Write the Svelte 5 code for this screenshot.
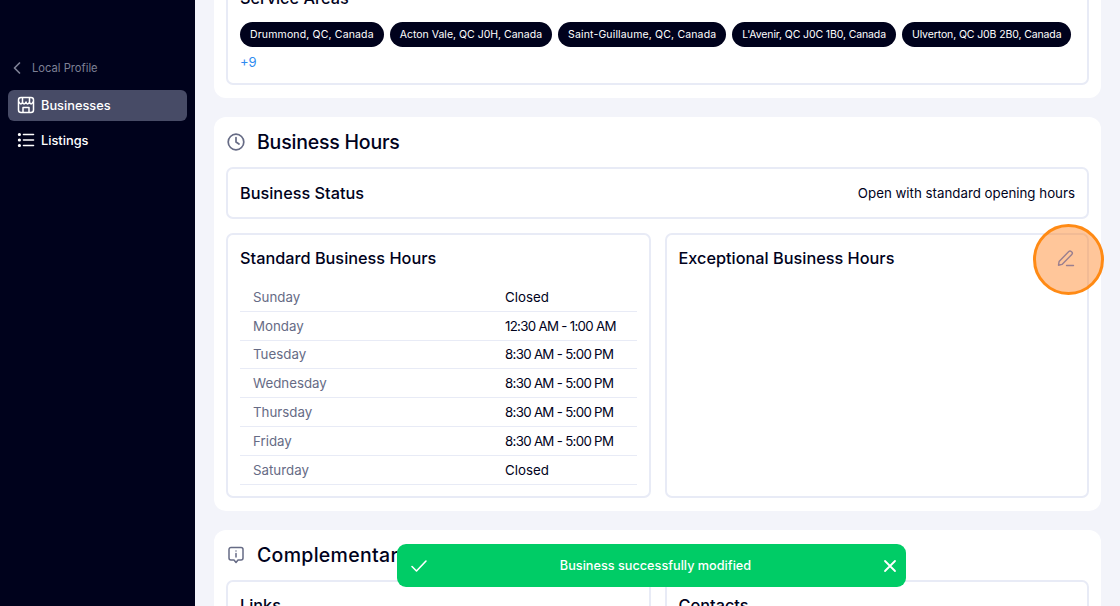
<script>
  const areas = [
    'Drummond, QC, Canada',
    'Acton Vale, QC J0H, Canada',
    'Saint-Guillaume, QC, Canada',
    "L'Avenir, QC J0C 1B0, Canada",
    'Ulverton, QC J0B 2B0, Canada',
  ]
  const hours = [
    ['Sunday', 'Closed'],
    ['Monday', '12:30 AM - 1:00 AM'],
    ['Tuesday', '8:30 AM - 5:00 PM'],
    ['Wednesday', '8:30 AM - 5:00 PM'],
    ['Thursday', '8:30 AM - 5:00 PM'],
    ['Friday', '8:30 AM - 5:00 PM'],
    ['Saturday', 'Closed'],
  ]
</script>

<div class="page">
  <aside class="sidebar">
    <div class="back">
      <svg width="18" height="18" viewBox="0 0 18 18" fill="none" stroke="#7d8095" stroke-width="1.7" stroke-linecap="round" stroke-linejoin="round"><path d="M11.5 4 6.5 9l5 5"/></svg>
      <span>Local Profile</span>
    </div>
    <div class="nav active">
      <svg width="18" height="18" viewBox="0 0 18 18" fill="none" stroke="#fff" stroke-width="1.5" stroke-linecap="round" stroke-linejoin="round"><rect x="1.5" y="1.5" width="15" height="15" rx="2.5"/><path d="M2 6c1 2.500 3 2.500 3.500 0 .5 2.500 2.500 2.500 3.500 0 .5 2.500 2.500 2.500 3.500 0 .5 2.500 2.500 2.500 3.500 0M5.500 2 5.500 6M12.500 2 12.500 6M6 16v-4.500h6V16"/></svg>
      <span>Businesses</span>
    </div>
    <div class="nav">
      <svg width="18" height="18" viewBox="0 0 18 18" fill="none" stroke="#fff" stroke-width="1.6" stroke-linecap="round"><path d="M6.500 3.500h10M6.500 9h10M6.500 14.500h10"/><path stroke-width="3" d="M2.300 3.500h.2M2.300 9h.2M2.300 14.500h.2"/></svg>
      <span>Listings</span>
    </div>
  </aside>

  <main class="content">
    <section class="card first">
      <div class="box areas">
        <h3>Service Areas</h3>
        <div class="chips">
          {#each areas as area}
            <span class="chip">{area}</span>
          {/each}
        </div>
        <div class="more">+9</div>
      </div>
    </section>

    <section class="card">
      <header class="card-head">
        <svg width="18" height="18" viewBox="0 0 18 18" fill="none" stroke="#666b85" stroke-width="1.700" stroke-linecap="round" stroke-linejoin="round"><circle cx="9" cy="9" r="7.800"/><path d="M9 4.500V9l3 2"/></svg>
        <h2>Business Hours</h2>
      </header>
      <div class="box status">
        <h3>Business Status</h3>
        <span>Open with standard opening hours</span>
      </div>
      <div class="columns">
        <div class="box hours">
          <h3>Standard Business Hours</h3>
          <div class="rows">
            {#each hours as [day, time]}
              <div class="row">
                <span class="day">{day}</span>
                <span class:narrow={time !== 'Closed'}>{time}</span>
              </div>
            {/each}
          </div>
        </div>
        <div class="box hours">
          <h3>Exceptional Business Hours</h3>
        </div>
      </div>
    </section>

    <section class="card">
      <header class="card-head">
        <svg width="18" height="18" viewBox="0 0 18 18" fill="none" stroke="#666b85" stroke-width="1.500" stroke-linejoin="round" stroke-linecap="round"><path d="M4 1.500h10a2 2 0 0 1 2 2v8.500a2 2 0 0 1-2 2h-3l-2 2.500L7 14H4a2 2 0 0 1-2-2V3.500a2 2 0 0 1 2-2z"/><path d="M9 7.500v3.500M9 5v.1"/></svg>
        <h2 class="wide">Complementary Information</h2>
      </header>
      <div class="columns">
        <div class="box hours"><h3>Links</h3></div>
        <div class="box hours"><h3>Contacts</h3></div>
      </div>
    </section>
  </main>

  <div class="spotlight">
    <svg width="20" height="20" viewBox="0 0 20 20" fill="none" stroke="#9a7f8f" stroke-width="1.400" stroke-linecap="round" stroke-linejoin="round"><path d="M2.500 17.200l.6-3.700L12.800 3.500a1.700 1.700 0 0 1 2.400 0l.6.6a1.700 1.700 0 0 1 0 2.400L6 16.400z"/><path d="M10.500 17.500h7"/></svg>
  </div>

  <div class="toast">
    <svg width="18" height="18" viewBox="0 0 18 18" fill="none" stroke="#fff" stroke-width="1.600" stroke-linecap="round" stroke-linejoin="round"><path d="M2 9.500l4.500 4.500 9.500-10"/></svg>
    <span>Business successfully modified</span>
    <svg width="14" height="14" viewBox="0 0 14 14" fill="none" stroke="#fff" stroke-width="1.800" stroke-linecap="round"><path d="M2 2l10 10M12 2 2 12"/></svg>
  </div>
</div>

<style>
  :global(body) {
    margin: 0;
    font-family: Inter, "Noto Sans", "Liberation Sans", sans-serif;
    color: #00021c;
  }
  .page {
    position: relative;
    display: flex;
    width: 1120px;
    height: 606px;
    overflow: hidden;
    background: #f3f4fa;
  }

  /* Sidebar */
  .sidebar {
    flex: 0 0 195px;
    box-sizing: border-box;
    padding: 59px 8px 0;
    background: #00021c;
    color: #fff;
  }
  .back {
    display: flex;
    align-items: center;
    gap: 6px;
    height: 18px;
    margin-bottom: 13px;
    color: #7d8095;
    font-size: 11.200px;
  }
  .nav {
    display: flex;
    align-items: center;
    gap: 6px;
    height: 31px;
    padding: 0 0 1px 9px;
    box-sizing: border-box;
    margin-bottom: 4px;
    border-radius: 6px;
    font-size: 12.800px;
    font-weight: 500;
  }
  .nav.active {
    background: #474b66;
  }

  /* Cards */
  .content {
    flex: 1;
    padding: 0 19px;
    margin-top: -32px;
  }
  .card {
    box-sizing: border-box;
    width: 887px;
    margin-bottom: 19px;
    padding: 13px 12px;
    border-radius: 12px;
    background: #fff;
  }
  .card.first {
    height: 130px;
    padding-top: 0;
  }
  .card-head {
    display: flex;
    align-items: center;
    gap: 12px;
    height: 23px;
    margin-bottom: 14px;
    padding-left: 1px;
  }
  .card-head h2 {
    margin: 0;
    font-size: 19.500px;
    font-weight: 500;
    letter-spacing: -0.200px;
    white-space: nowrap;
  }
  .card-head h2.wide {
    letter-spacing: 0.300px;
  }
  .box {
    box-sizing: border-box;
    border: 2px solid #e8ebf6;
    border-radius: 7px;
    background: #fff;
  }
  h3 {
    margin: 0;
    font-size: 16.300px;
    font-weight: 500;
  }
  .areas {
    height: 117px;
    padding: 18px 12px 0;
  }
  .chips {
    display: flex;
    gap: 6px;
    margin-top: 14px;
  }
  .chip {
    display: flex;
    align-items: center;
    height: 25px;
    padding: 0 10px;
    border-radius: 13px;
    background: #00021c;
    color: #fff;
    font-size: 10.500px;
    white-space: nowrap;
  }
  .chip:nth-child(1),
  .chip:nth-child(3) {
    letter-spacing: 0.150px;
  }
  .chip:nth-child(4),
  .chip:nth-child(5) {
    letter-spacing: -0.120px;
  }
  .more {
    margin-top: 7px;
    color: #2f8bf0;
    font-size: 13px;
  }
  .status {
    display: flex;
    align-items: center;
    justify-content: space-between;
    height: 52px;
    padding: 0 12px;
    font-size: 13.300px;
  }
  .columns {
    display: grid;
    grid-template-columns: 425px 1fr;
    gap: 13.500px;
    margin-top: 14px;
  }
  .hours {
    height: 265px;
    padding: 13px 12px 0;
  }
  .rows {
    margin-top: 15px;
  }
  .row {
    display: flex;
    align-items: center;
    box-sizing: border-box;
    height: 28.800px;
    padding-left: 13px;
    border-bottom: 1px solid #e8ebf6;
    font-size: 13.300px;
  }
  .day {
    flex: 0 0 252px;
    color: #666b85;
  }
  .narrow {
    letter-spacing: -0.700px;
  }

  /* Overlays */
  .spotlight {
    position: absolute;
    left: 1033px;
    top: 224px;
    display: flex;
    align-items: center;
    justify-content: center;
    box-sizing: border-box;
    width: 71px;
    height: 71px;
    padding: 0 5px 3px 0;
    border: 3px solid #ff8a14;
    border-radius: 50%;
    background: rgba(255, 128, 30, 0.45);
  }
  .toast {
    position: absolute;
    left: 397px;
    top: 544px;
    display: flex;
    align-items: center;
    justify-content: space-between;
    box-sizing: border-box;
    width: 509px;
    height: 43px;
    padding: 0 9px 0 13px;
    border-radius: 9px;
    background: #00cc66;
    color: #fff;
    font-size: 12.700px;
    font-weight: 500;
  }
</style>
